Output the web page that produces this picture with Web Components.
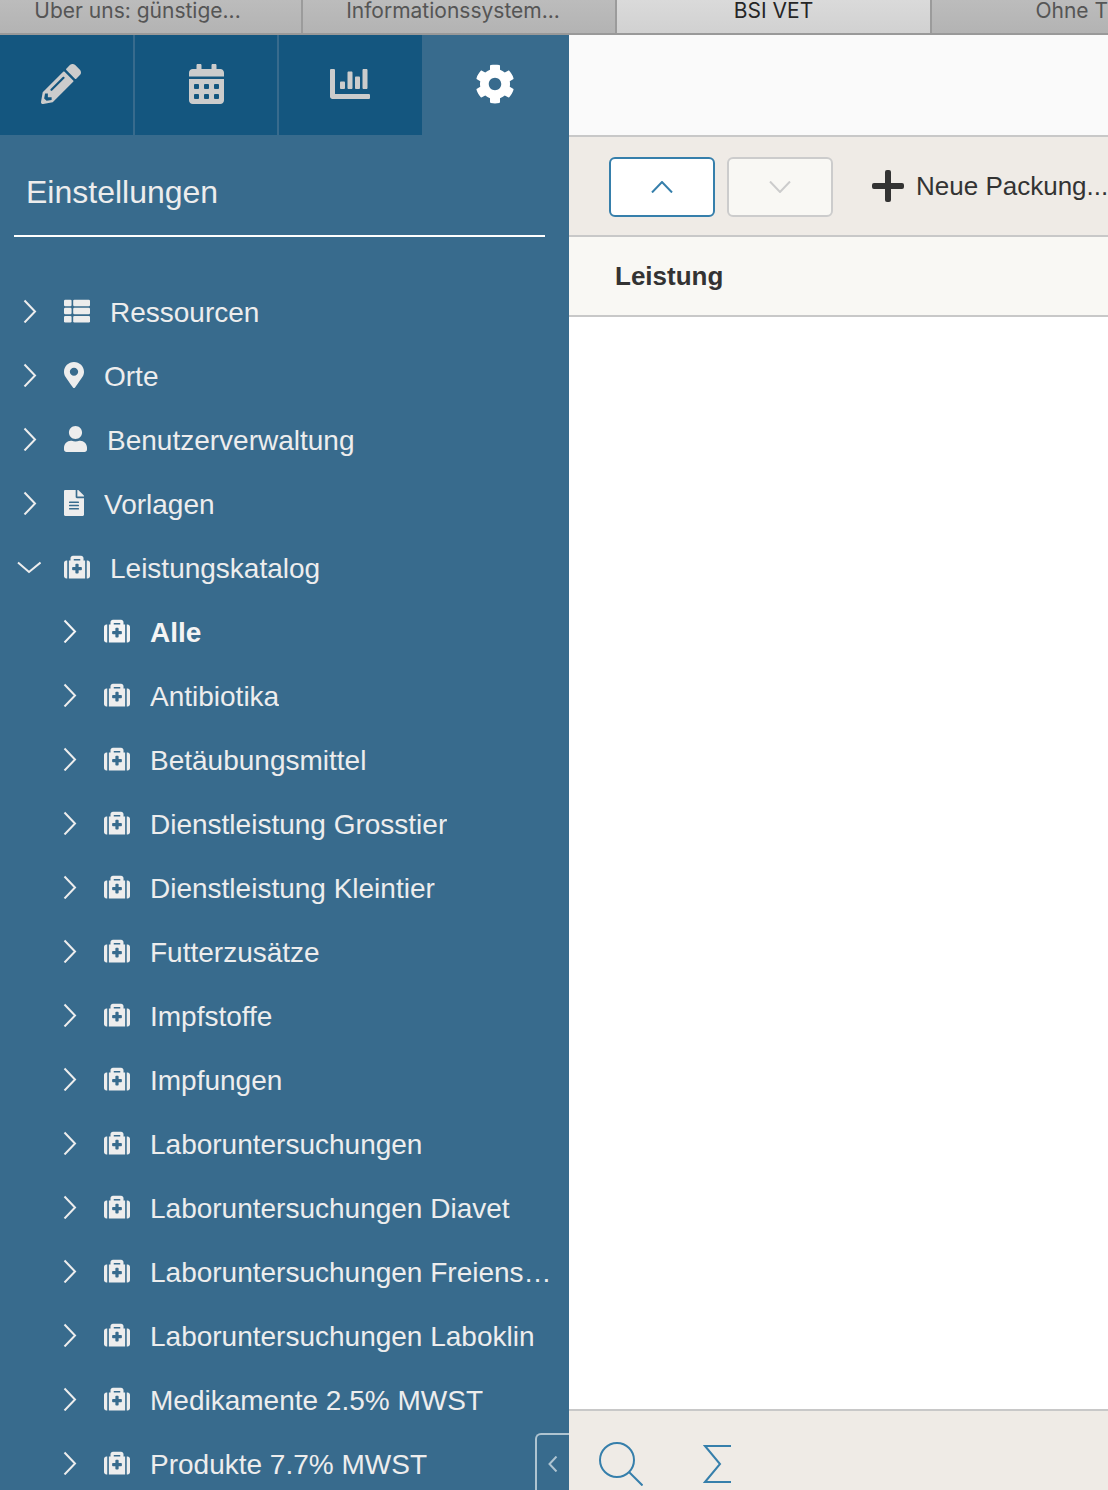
<!DOCTYPE html>
<html lang="de">
<head>
<meta charset="utf-8">
<meta name="viewport" content="width=device-width, initial-scale=1">
<title>BSI VET</title>
<style>
  body {
    margin: 0;
    height: 100vh;
    overflow: hidden;
    font-family: "Liberation Sans", Arial, sans-serif;
    display: flex;
    flex-direction: column;
  }
</style>
</head>
<body>
<browser-tabs>
  <browser-tab first>Über uns: günstige...</browser-tab>
  <browser-tab>Informationssystem...</browser-tab>
  <browser-tab active>BSI VET</browser-tab>
  <browser-tab last>Ohne T</browser-tab>
</browser-tabs>
<vet-desktop>
  <vet-navigation slot="navigation" heading="Einstellungen">
    <view-button slot="views" icon="pencil" label="Bearbeiten" first></view-button>
    <view-button slot="views" icon="calendar" label="Kalender"></view-button>
    <view-button slot="views" icon="chart" label="Auswertungen" last></view-button>
    <view-button slot="views" icon="cog" label="Einstellungen" selected></view-button>
    <outline-node icon="list">Ressourcen</outline-node>
    <outline-node icon="marker">Orte</outline-node>
    <outline-node icon="user">Benutzerverwaltung</outline-node>
    <outline-node icon="file">Vorlagen</outline-node>
    <outline-node icon="medkit" expanded>Leistungskatalog</outline-node>
    <outline-node icon="medkit" child selected>Alle</outline-node>
    <outline-node icon="medkit" child>Antibiotika</outline-node>
    <outline-node icon="medkit" child>Betäubungsmittel</outline-node>
    <outline-node icon="medkit" child>Dienstleistung Grosstier</outline-node>
    <outline-node icon="medkit" child>Dienstleistung Kleintier</outline-node>
    <outline-node icon="medkit" child>Futterzusätze</outline-node>
    <outline-node icon="medkit" child>Impfstoffe</outline-node>
    <outline-node icon="medkit" child>Impfungen</outline-node>
    <outline-node icon="medkit" child>Laboruntersuchungen</outline-node>
    <outline-node icon="medkit" child>Laboruntersuchungen Diavet</outline-node>
    <outline-node icon="medkit" child>Laboruntersuchungen Freiens…</outline-node>
    <outline-node icon="medkit" child>Laboruntersuchungen Laboklin</outline-node>
    <outline-node icon="medkit" child>Medikamente 2.5% MWST</outline-node>
    <outline-node icon="medkit" child>Produkte 7.7% MWST</outline-node>
  </vet-navigation>
  <vet-bench>
    <bench-menu slot="menu"></bench-menu>
    <bench-table column="Leistung"></bench-table>
    <bench-footer slot="footer"></bench-footer>
  </vet-bench>
</vet-desktop>

<script>
  // name: [width, height, viewBox, markup]
  const ICONS = {
    pencil: [40, 40, '0 0 512 512', '<path d="M497.9 142.1l-46.1 46.1c-4.7 4.7-12.3 4.7-17 0l-111-111c-4.7-4.7-4.7-12.3 0-17l46.1-46.1c18.7-18.7 49.1-18.7 67.9 0l60.1 60.1c18.8 18.7 18.8 49.1 0 67.9zM284.2 99.8L21.6 362.4.4 483.9c-2.9 16.4 11.4 30.6 27.8 27.8l121.5-21.3 262.6-262.6c4.7-4.7 4.7-12.3 0-17l-111-111c-4.8-4.7-12.4-4.7-17.1 0zM124.1 339.9c-5.5-5.5-5.5-14.3 0-19.8l154-154c5.5-5.5 14.3-5.5 19.8 0s5.5 14.3 0 19.8l-154 154c-5.5 5.5-14.3 5.5-19.8 0zM88 424h48v36.3l-64.5 11.3-31.1-31.1L51.7 376H88v48z"/>'],
    calendar: [35, 40, '0 0 448 512', '<path fill-rule="evenodd" d="M0 464c0 26.500 21.500 48 48 48h352c26.500 0 48-21.500 48-48V192H0zM76 256h40q12 0 12 12v40q0 12-12 12H76q-12 0-12-12v-40q0-12 12-12zm128 0h40q12 0 12 12v40q0 12-12 12h-40q-12 0-12-12v-40q0-12 12-12zm128 0h40q12 0 12 12v40q0 12-12 12h-40q-12 0-12-12v-40q0-12 12-12zM76 384h40q12 0 12 12v40q0 12-12 12H76q-12 0-12-12v-40q0-12 12-12zm128 0h40q12 0 12 12v40q0 12-12 12h-40q-12 0-12-12v-40q0-12 12-12zm128 0h40q12 0 12 12v40q0 12-12 12h-40q-12 0-12-12v-40q0-12 12-12z"/><path d="M400 64h-48V16c0-8.800-7.200-16-16-16h-32c-8.800 0-16 7.200-16 16v48H160V16c0-8.800-7.200-16-16-16h-32c-8.800 0-16 7.200-16 16v48H48C21.500 64 0 85.500 0 112v48h448v-48c0-26.500-21.500-48-48-48z"/>'],
    chart: [40, 40, '0 0 512 512', '<path d="M332.8 320h38.4c6.4 0 12.8-6.4 12.8-12.8V172.8c0-6.4-6.4-12.8-12.8-12.8h-38.4c-6.4 0-12.8 6.4-12.8 12.8v134.4c0 6.4 6.4 12.8 12.8 12.8zm96 0h38.4c6.4 0 12.8-6.4 12.8-12.8V76.8c0-6.4-6.4-12.8-12.8-12.8h-38.4c-6.4 0-12.8 6.4-12.8 12.8v230.4c0 6.4 6.4 12.8 12.8 12.8zm-288 0h38.4c6.4 0 12.8-6.4 12.8-12.8v-70.4c0-6.4-6.4-12.8-12.8-12.8h-38.4c-6.4 0-12.8 6.4-12.8 12.8v70.4c0 6.4 6.4 12.8 12.8 12.8zm96 0h38.4c6.4 0 12.8-6.4 12.8-12.8V108.800c0-6.4-6.4-12.8-12.8-12.8h-38.4c-6.4 0-12.8 6.4-12.8 12.8v198.4c0 6.4 6.4 12.8 12.8 12.8zM496 384H64V80c0-8.840-7.160-16-16-16H16C7.160 64 0 71.160 0 80v336c0 17.670 14.330 32 32 32h464c8.840 0 16-7.160 16-16v-32c0-8.840-7.160-16-16-16z"/>'],
    cog: [40, 40, '0 0 512 512', '<path d="M487.4 315.7l-42.6-24.6c4.3-23.2 4.3-47 0-70.2l42.6-24.6c4.9-2.8 7.1-8.6 5.5-14-11.1-35.6-30-67.8-54.7-94.6-3.8-4.1-10-5.1-14.8-2.3L380.8 110c-17.9-15.4-38.5-27.3-60.8-35.1V25.8c0-5.6-3.9-10.5-9.4-11.7-36.7-8.2-74.3-7.8-109.2 0-5.5 1.2-9.4 6.1-9.4 11.7V75c-22.2 7.9-42.8 19.8-60.8 35.1L88.7 85.5c-4.9-2.8-11-1.9-14.8 2.3-24.7 26.7-43.6 58.9-54.7 94.6-1.7 5.4.6 11.2 5.5 14L67.3 221c-4.3 23.2-4.3 47 0 70.2l-42.6 24.6c-4.9 2.8-7.1 8.6-5.5 14 11.1 35.6 30 67.8 54.7 94.6 3.8 4.1 10 5.1 14.8 2.3l42.6-24.6c17.9 15.4 38.5 27.3 60.8 35.1v49.2c0 5.6 3.9 10.5 9.4 11.7 36.7 8.2 74.3 7.8 109.2 0 5.5-1.2 9.4-6.1 9.4-11.7v-49.2c22.2-7.9 42.8-19.8 60.8-35.1l42.6 24.6c4.9 2.8 11 1.9 14.8-2.3 24.7-26.7 43.6-58.9 54.7-94.6 1.5-5.5-.7-11.3-5.6-14.1zM256 336c-44.1 0-80-35.9-80-80s35.9-80 80-80 80 35.9 80 80-35.9 80-80 80z"/>'],
    list: [26, 26, '0 0 512 512', '<rect y="32" width="149" height="128" rx="24"/><rect x="181" y="32" width="331" height="128" rx="24"/><rect y="192" width="149" height="128" rx="24"/><rect x="181" y="192" width="331" height="128" rx="24"/><rect y="352" width="149" height="128" rx="24"/><rect x="181" y="352" width="331" height="128" rx="24"/>'],
    marker: [20, 26, '0 0 384 512', '<path d="M172.268 501.67C26.97 291.031 0 269.413 0 192 0 85.961 85.961 0 192 0s192 85.961 192 192c0 77.413-26.97 99.031-172.268 309.67-9.535 13.774-29.93 13.773-39.464 0zM192 272c44.183 0 80-35.817 80-80s-35.817-80-80-80-80 35.817-80 80 35.817 80 80 80z"/>'],
    user: [23, 26, '0 0 448 512', '<path d="M224 256c70.7 0 128-57.3 128-128S294.7 0 224 0 96 57.3 96 128s57.3 128 128 128zm89.6 32h-16.7c-22.2 10.2-46.9 16-72.9 16s-50.6-5.8-72.9-16h-16.7C60.2 288 0 348.2 0 422.4V464c0 26.5 21.5 48 48 48h352c26.5 0 48-21.5 48-48v-41.6c0-74.2-60.2-134.4-134.4-134.4z"/>'],
    file: [20, 26, '0 0 384 512', '<path d="M224 136V0H24C10.7 0 0 10.7 0 24v464c0 13.3 10.7 24 24 24h336c13.3 0 24-10.7 24-24V160H248c-13.2 0-24-10.8-24-24zm64 236c0 6.6-5.4 12-12 12H108c-6.6 0-12-5.4-12-12v-8c0-6.6 5.4-12 12-12h168c6.6 0 12 5.4 12 12v8zm0-64c0 6.6-5.4 12-12 12H108c-6.6 0-12-5.4-12-12v-8c0-6.6 5.4-12 12-12h168c6.6 0 12 5.4 12 12v8zm0-72v8c0 6.6-5.4 12-12 12H108c-6.6 0-12-5.4-12-12v-8c0-6.6 5.4-12 12-12h168c6.6 0 12 5.4 12 12zm96-114.1v6.1H256V0h6.1c6.4 0 12.5 2.5 17 7l97.9 98c4.5 4.5 7 10.6 7 16.9z"/>'],
    medkit: [26, 26, '0 0 512 512', '<path d="M96 480h320V128h-32V80c0-26.51-21.49-48-48-48H176c-26.51 0-48 21.49-48 48v48H96v352zm96-384h128v32H192V96zm320 80v256c0 26.51-21.49 48-48 48h-16V128h16c26.51 0 48 21.49 48 48zM64 480H48c-26.51 0-48-21.49-48-48V176c0-26.51 21.49-48 48-48h16v352zm288-208v32c0 8.837-7.163 16-16 16h-48v48c0 8.837-7.163 16-16 16h-32c-8.837 0-16-7.163-16-16v-48h-48c-8.837 0-16-7.163-16-16v-32c0-8.837 7.163-16 16-16h48v-48c0-8.837 7.163-16 16-16h32c8.837 0 16 7.163 16 16v48h48c8.837 0 16 7.163 16 16z"/>'],
    plus: [32, 32, '0 0 32 32', '<path d="M13 2q0-2 2-2h2q2 0 2 2v11h11q2 0 2 2v2q0 2-2 2H19v11q0 2-2 2h-2q-2 0-2-2V19H2q-2 0-2-2v-2q0-2 2-2h11z"/>'],
    right: [24, 24, '0 0 24 24', '<path class="line" d="M7.500 1.500l10.500 11-10.500 11"/>'],
    down: [24, 24, '0 0 24 24', '<path class="line" d="M1 7.500l11 9.500L23.500 7.500"/>'],
    left: [10, 16, '0 0 10 16', '<path class="line" d="M8.500 0.500L1.500 8l7 7.500"/>'],
    arrowUp: [22, 12, '0 0 22 12', '<path class="line" d="M1 11.500L11 1l10 10.500"/>'],
    arrowDown: [22, 12, '0 0 22 12', '<path class="line" d="M1 0.500L11 11 21 0.500"/>'],
    search: [44, 44, '0 0 44 44', '<g class="line"><circle cx="18" cy="18" r="17"/><path d="M30 30l13.500 13.500"/></g>'],
    sum: [28, 40, '0 0 28 40', '<path class="line" d="M28 2H2l15 18L2 38h26"/>']
  };

  class AppIcon extends HTMLElement {
    connectedCallback() {
      const [width, height, box, markup] = ICONS[this.getAttribute('name')];
      this.attachShadow({ mode: 'open' }).innerHTML = `
        <style>
          :host { display: inline-flex; flex: none; }
          svg { display: block; fill: currentColor; }
          .line { fill: none; stroke: currentColor; stroke-width: 2; }
        </style>
        <svg width="${width}" height="${height}" viewBox="${box}" preserveAspectRatio="none" aria-hidden="true">${markup}</svg>
      `;
    }
  }

  class BrowserTabs extends HTMLElement {
    connectedCallback() {
      this.attachShadow({ mode: 'open' }).innerHTML = `
        <style>
          :host {
            display: grid;
            grid-template-columns: 303fr 314fr 315fr 176fr;
            flex: none;
            height: 33px;
            border-bottom: 2px solid #999;
            background: linear-gradient(#bcbcbc, #b3b3b3);
            font-family: Inter, "Open Sans", sans-serif;
            font-size: 21px;
          }
        </style>
        <slot></slot>
      `;
    }
  }

  class BrowserTab extends HTMLElement {
    connectedCallback() {
      this.attachShadow({ mode: 'open' }).innerHTML = `
        <style>
          :host { display: block; min-width: 0; border-right: 2px solid #9b9b9b; color: #555; }
          :host([active]) { background: linear-gradient(#dadada, #d1d1d1); color: #262626; }
          :host([last]) { border-right: 0; }
          a {
            display: block;
            height: 33px;
            padding-right: 12px;
            box-sizing: border-box;
            line-height: 22px;
            text-align: center;
            text-decoration: none;
            white-space: nowrap;
            overflow: hidden;
            color: inherit;
          }
          :host([first]) a { padding-right: 26px; }
          :host([active]) a { padding-right: 0; }
          :host([last]) a { padding-right: 0; text-align: right; }
        </style>
        <a href="#"><slot></slot></a>
      `;
    }
  }

  class VetDesktop extends HTMLElement {
    connectedCallback() {
      this.attachShadow({ mode: 'open' }).innerHTML = `
        <style>
          :host {
            display: grid;
            grid-template-columns: 569fr 539fr;
            grid-template-rows: minmax(0, 1fr);
            flex: 1;
            min-height: 0;
          }
        </style>
        <slot name="navigation"></slot>
        <slot></slot>
      `;
    }
  }

  class VetNavigation extends HTMLElement {
    connectedCallback() {
      this.attachShadow({ mode: 'open' }).innerHTML = `
        <style>
          :host {
            display: block;
            position: relative;
            min-width: 0;
            overflow: hidden;
            background: #386b8d;
            color: #ededed;
          }
          .views {
            display: grid;
            grid-template-columns: 135fr 144fr 143fr 147fr;
            height: 100px;
          }
          h1 {
            margin: 0 24px 0 14px;
            padding: 0 12px;
            height: 100px;
            line-height: 114px;
            border-bottom: 2px solid #fff;
            font-size: 32px;
            font-weight: 400;
          }
          nav { padding-top: 42px; }
          .collapse {
            position: absolute;
            right: 0;
            bottom: 0;
            width: 34px;
            height: 57px;
            padding: 6px 0 0;
            border: 2px solid #afc4d1;
            border-right: 0;
            border-bottom: 0;
            border-radius: 6px 0 0 0;
            background: #386b8d;
            color: #afc4d1;
          }
        </style>
        <div class="views"><slot name="views"></slot></div>
        <h1>${this.getAttribute('heading')}</h1>
        <nav><slot></slot></nav>
        <button class="collapse" aria-label="Navigation einklappen"><app-icon name="left"></app-icon></button>
      `;
    }
  }

  class ViewButton extends HTMLElement {
    connectedCallback() {
      this.attachShadow({ mode: 'open' }).innerHTML = `
        <style>
          :host { display: block; }
          button {
            display: flex;
            align-items: center;
            justify-content: center;
            width: 100%;
            height: 100%;
            padding: 0 0 2px;
            border: 0;
            border-right: 2px solid #386b8d;
            background: #14567f;
            color: #ccc;
          }
          :host([first]) button { padding-right: 12px; }
          :host([last]) button { border-color: #14567f; }
          :host([selected]) button { background: #386b8d; color: #fff; }
        </style>
        <button aria-label="${this.getAttribute('label')}"><app-icon name="${this.getAttribute('icon')}"></app-icon></button>
      `;
    }
  }

  class OutlineNode extends HTMLElement {
    connectedCallback() {
      const arrow = this.hasAttribute('expanded') ? 'down' : 'right';
      this.attachShadow({ mode: 'open' }).innerHTML = `
        <style>
          :host { display: block; font-size: 28px; }
          :host([child]) { padding-left: 40px; }
          :host([selected]) { font-weight: 700; color: #f4f4f4; }
          a {
            display: flex;
            align-items: center;
            height: 64px;
            padding: 0 12px 0 17px;
            color: inherit;
            text-decoration: none;
          }
          .arrow { margin-right: 23px; }
          .label {
            margin-left: 20px;
            padding-top: 4px;
            line-height: 60px;
            white-space: nowrap;
            overflow: hidden;
            text-overflow: ellipsis;
          }
        </style>
        <a href="#">
          <app-icon class="arrow" name="${arrow}"></app-icon>
          <app-icon name="${this.getAttribute('icon')}"></app-icon>
          <span class="label"><slot></slot></span>
        </a>
      `;
    }
  }

  class VetBench extends HTMLElement {
    connectedCallback() {
      this.attachShadow({ mode: 'open' }).innerHTML = `
        <style>
          :host {
            display: flex;
            flex-direction: column;
            min-width: 0;
            overflow: hidden;
            background: #fff;
            color: #333;
            font-size: 26px;
          }
          header { flex: none; height: 100px; background: #fafafa; }
          main { flex: 1; min-height: 0; }
        </style>
        <header></header>
        <slot name="menu"></slot>
        <main><slot></slot></main>
        <slot name="footer"></slot>
      `;
    }
  }

  class BenchMenu extends HTMLElement {
    connectedCallback() {
      this.attachShadow({ mode: 'open' }).innerHTML = `
        <style>
          :host {
            display: flex;
            flex: none;
            gap: 12px;
            padding: 20px 0 18px 40px;
            border-top: 2px solid #c8c8c8;
            background: #efebe6;
          }
          button { font: inherit; color: inherit; }
          .move {
            display: flex;
            flex: none;
            align-items: center;
            justify-content: center;
            width: 106px;
            height: 60px;
            border: 2px solid #367fab;
            border-radius: 6px;
            background: #fff;
            color: #367fab;
          }
          .move:disabled { border-color: #ccc; background: #f9f8f4; color: #ccc; }
          .new {
            display: flex;
            flex: none;
            align-items: center;
            gap: 12px;
            margin-left: 27px;
            padding: 0;
            height: 58px;
            border: 0;
            background: none;
            white-space: nowrap;
          }
        </style>
        <button class="move" aria-label="Nach oben"><app-icon name="arrowUp"></app-icon></button>
        <button class="move" aria-label="Nach unten" disabled><app-icon name="arrowDown"></app-icon></button>
        <button class="new"><app-icon name="plus"></app-icon>Neue Packung...</button>
      `;
    }
  }

  class BenchTable extends HTMLElement {
    connectedCallback() {
      this.attachShadow({ mode: 'open' }).innerHTML = `
        <style>
          :host { display: block; }
          table { width: 100%; border-collapse: separate; border-spacing: 0; }
          th {
            height: 78px;
            padding: 0 0 0 46px;
            border: 2px solid #c8c8c8;
            border-left: 0;
            border-right: 0;
            background: #f9f8f4;
            text-align: left;
          }
        </style>
        <table>
          <thead><tr><th scope="col">${this.getAttribute('column')}</th></tr></thead>
          <tbody></tbody>
        </table>
      `;
    }
  }

  class BenchFooter extends HTMLElement {
    connectedCallback() {
      this.attachShadow({ mode: 'open' }).innerHTML = `
        <style>
          :host {
            display: flex;
            flex: none;
            align-items: flex-start;
            gap: 60px;
            height: 48px;
            padding: 31px 0 0 30px;
            border-top: 2px solid #c8c8c8;
            background: #efebe6;
          }
          button { display: flex; align-items: center; height: 44px; padding: 0; border: 0; background: none; color: #367fab; }
        </style>
        <button aria-label="Suchen"><app-icon name="search"></app-icon></button>
        <button aria-label="Summe"><app-icon name="sum"></app-icon></button>
      `;
    }
  }

  customElements.define('app-icon', AppIcon);
  customElements.define('browser-tabs', BrowserTabs);
  customElements.define('browser-tab', BrowserTab);
  customElements.define('vet-desktop', VetDesktop);
  customElements.define('vet-navigation', VetNavigation);
  customElements.define('view-button', ViewButton);
  customElements.define('outline-node', OutlineNode);
  customElements.define('vet-bench', VetBench);
  customElements.define('bench-menu', BenchMenu);
  customElements.define('bench-table', BenchTable);
  customElements.define('bench-footer', BenchFooter);
</script>
</body>
</html>
